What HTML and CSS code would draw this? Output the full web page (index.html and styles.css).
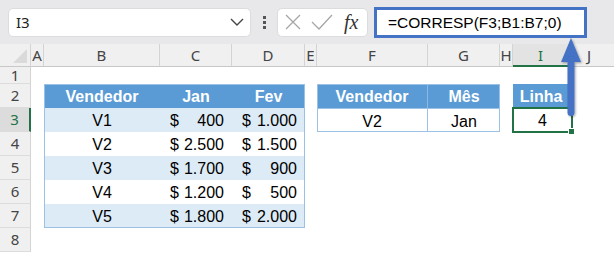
FILE: index.html
```html
<!DOCTYPE html>
<html lang="pt-BR">
<head>
    <meta charset="UTF-8">
    <title>CORRESP</title>
    <link rel="stylesheet" href="styles.css">
</head>
<body>

    <!-- Barra de fórmulas -->
    <div class="toolbar">
        <div class="namebox">
            <span>I3</span>
            <svg width="14" height="8" viewBox="0 0 14 8"><polyline points="1,1 7,7 13,1" fill="none" stroke="#444" stroke-width="1.4"/></svg>
        </div>
        <div class="dots"><i></i><i></i><i></i></div>
        <div class="fxbox">
            <svg width="18" height="18" viewBox="0 0 18 18"><path d="M2 2 L16 16 M16 2 L2 16" stroke="#a6a6a6" stroke-width="1.3" fill="none"/></svg>
            <svg width="22" height="18" viewBox="0 0 22 18"><polyline points="1,9 8,16 21,2" stroke="#a6a6a6" stroke-width="1.3" fill="none"/></svg>
            <span class="fx">fx</span>
        </div>
        <div class="formula">=CORRESP(F3;B1:B7;0)</div>
    </div>

    <!-- Planilha -->
    <div class="sheet">
        <div class="corner"></div>
        <div class="colhdr">A</div>
        <div class="colhdr">B</div>
        <div class="colhdr">C</div>
        <div class="colhdr">D</div>
        <div class="colhdr">E</div>
        <div class="colhdr">F</div>
        <div class="colhdr">G</div>
        <div class="colhdr">H</div>
        <div class="colhdr ativo">I</div>
        <div class="colhdr ultimo">J</div>

        <div class="rowhdr r1">1</div>
        <div class="rowhdr r2">2</div>
        <div class="rowhdr r3 ativo">3</div>
        <div class="rowhdr r4">4</div>
        <div class="rowhdr r5">5</div>
        <div class="rowhdr r6">6</div>
        <div class="rowhdr r7">7</div>
        <div class="rowhdr r8">8</div>

        <!-- Tabela de vendas -->
        <div class="tabela vendas">
            <div class="cab">Vendedor</div><div class="cab">Jan</div><div class="cab">Fev</div>

            <div class="faixa centro">V1</div>
            <div class="faixa moeda"><span>$</span><span>400</span></div>
            <div class="faixa moeda"><span>$</span><span>1.000</span></div>

            <div class="centro">V2</div>
            <div class="moeda"><span>$</span><span>2.500</span></div>
            <div class="moeda"><span>$</span><span>1.500</span></div>

            <div class="faixa centro">V3</div>
            <div class="faixa moeda"><span>$</span><span>1.700</span></div>
            <div class="faixa moeda"><span>$</span><span>900</span></div>

            <div class="centro">V4</div>
            <div class="moeda"><span>$</span><span>1.200</span></div>
            <div class="moeda"><span>$</span><span>500</span></div>

            <div class="faixa centro">V5</div>
            <div class="faixa moeda"><span>$</span><span>1.800</span></div>
            <div class="faixa moeda"><span>$</span><span>2.000</span></div>
        </div>

        <!-- Critérios -->
        <div class="tabela busca">
            <div class="cab div">Vendedor</div><div class="cab">Mês</div>
            <div class="centro div linha">V2</div><div class="centro linha">Jan</div>
        </div>

        <!-- Resultado -->
        <div class="tabela resultado">
            <div class="cab">Linha</div>
            <div class="centro selecionada">4<span class="alca"></span></div>
        </div>
    </div>

    <!-- Seta apontando para a fórmula -->
    <svg class="seta" width="40" height="100" viewBox="0 0 40 100">
        <defs>
            <filter id="sombra" x="-50%" y="-20%" width="200%" height="140%">
                <feDropShadow dx="1" dy="1" stdDeviation="1.2" flood-color="#000" flood-opacity="0.35"/>
            </filter>
        </defs>
        <g filter="url(#sombra)" fill="#4472c4">
            <path d="M20 2 L30 26 L10 26 Z"/>
            <rect x="16.5" y="20" width="7" height="60" rx="3.5"/>
        </g>
    </svg>

</body>
</html>
```

FILE: styles.css
```css
body {
    margin: 0;
    width: 614px;
    height: 253px;
    overflow: hidden;
    background-color: #ffffff;
    font-family: "Liberation Sans", Arial, sans-serif;
    position: relative;
}

.toolbar {
    height: 44px;
    box-sizing: border-box;
    background-color: #e8e8eb;
    display: flex;
    align-items: center;
    padding: 0 0 0 8px;
}

.namebox {
    width: 243px;
    height: 29px;
    box-sizing: border-box;
    background-color: #ffffff;
    border: 1px solid #dcdcdf;
    border-radius: 5px;
    display: flex;
    align-items: center;
    justify-content: space-between;
    padding: 0 6px 0 7px;
    font-family: "Noto Sans", sans-serif;
    font-size: 15px;
    color: #222;
}

.dots {
    width: 26px;
    display: flex;
    flex-direction: column;
    align-items: center;
    gap: 2px;
}

.dots i {
    width: 3px;
    height: 3px;
    background-color: #555;
}

.fxbox {
    width: 91px;
    height: 29px;
    box-sizing: border-box;
    background-color: #ffffff;
    border: 1px solid #dcdcdf;
    border-radius: 5px;
    display: flex;
    align-items: center;
    gap: 9px;
    padding-left: 6px;
}

.fx {
    font-family: "Liberation Serif", serif;
    font-style: italic;
    font-size: 20px;
    color: #333;
    margin-left: 2px;
}

.formula {
    margin-left: 6px;
    width: 213px;
    height: 31px;
    box-sizing: border-box;
    border: 3px solid #4472c4;
    background-color: #ffffff;
    font-size: 15.5px;
    line-height: 25px;
    padding-left: 11px;
    color: #000;
}

.sheet {
    display: grid;
    grid-template-columns: 31px 13px 116px 72px 73px 12px 111px 72px 13px 56px 1fr;
    grid-template-rows: 23px 17px repeat(7, 24px);
}

.corner {
    background-color: #f0f0f0;
    border-right: 1px solid #d4d4d4;
    border-bottom: 1px solid #c8c8c8;
    position: relative;
}

.corner::after {
    content: "";
    position: absolute;
    right: 3px;
    bottom: 3px;
    border-left: 14px solid transparent;
    border-bottom: 14px solid #dadada;
}

.colhdr {
    background-color: #f0f0f0;
    border-right: 1px solid #d4d4d4;
    border-bottom: 1px solid #c8c8c8;
    font-family: "Noto Sans", sans-serif;
    font-size: 15px;
    color: #444;
    text-align: center;
    line-height: 22px;
}

.colhdr.ativo {
    background-color: #e3e3e3;
    border-bottom: 2px solid #217346;
    color: #217346;
}

.colhdr.ultimo {
    text-align: left;
    padding-left: 18px;
    border-right: none;
}

.rowhdr {
    grid-column: 1;
    background-color: #f0f0f0;
    border-right: 1px solid #d4d4d4;
    border-bottom: 1px solid #dcdcdc;
    font-family: "Noto Sans", sans-serif;
    font-size: 15px;
    color: #444;
    text-align: center;
    line-height: 23px;
}

.rowhdr.r1 { grid-row: 2; line-height: 16px; }
.rowhdr.r2 { grid-row: 3; }
.rowhdr.r3 { grid-row: 4; }
.rowhdr.r4 { grid-row: 5; }
.rowhdr.r5 { grid-row: 6; }
.rowhdr.r6 { grid-row: 7; }
.rowhdr.r7 { grid-row: 8; }
.rowhdr.r8 { grid-row: 9; }

.rowhdr.ativo {
    background-color: #dcdcdc;
    border-right: 2px solid #217346;
    color: #217346;
}

.tabela {
    display: grid;
    grid-auto-rows: 24px;
    font-size: 16px;
    color: #000;
}

.tabela > div {
    line-height: 26px;
}

.vendas {
    grid-column: 3 / 6;
    grid-row: 3 / 9;
    grid-template-columns: 116px 72px 73px;
    outline: 1px solid #9bc2e6;
    outline-offset: -1px;
}

.busca {
    grid-column: 7 / 9;
    grid-row: 3 / 5;
    grid-template-columns: 111px 72px;
    outline: 1px solid #9bc2e6;
    outline-offset: -1px;
}

.resultado {
    grid-column: 10 / 11;
    grid-row: 3 / 5;
    grid-template-columns: 56px;
}

.cab {
    background-color: #5b9bd5;
    color: #ffffff;
    font-weight: bold;
    text-align: center;
}

.faixa {
    background-color: #ddebf7;
}

.centro {
    text-align: center;
}

.moeda {
    display: flex;
    justify-content: space-between;
    padding: 0 8px 0 10px;
}

.div {
    border-right: 1px solid #9bc2e6;
}

.cab.div {
    border-right-color: #8db8e2;
}

.linha {
    border-top: 1px solid #9bc2e6;
}

.selecionada {
    position: relative;
    outline: 2px solid #217346;
    outline-offset: -1px;
    margin-right: -3px;
}

.alca {
    position: absolute;
    right: -3px;
    bottom: -3px;
    width: 5px;
    height: 5px;
    background-color: #217346;
    border: 1px solid #ffffff;
}

.seta {
    position: absolute;
    left: 551px;
    top: 36px;
}
```
